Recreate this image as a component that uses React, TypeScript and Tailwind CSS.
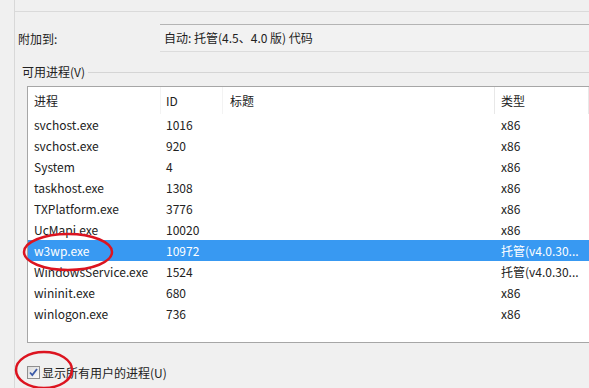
import React from "react";

const rows: { name: string; id: string; type: string; sel?: boolean }[] = [
  { name: "svchost.exe", id: "1016", type: "x86" },
  { name: "svchost.exe", id: "920", type: "x86" },
  { name: "System", id: "4", type: "x86" },
  { name: "taskhost.exe", id: "1308", type: "x86" },
  { name: "TXPlatform.exe", id: "3776", type: "x86" },
  { name: "UcMapi.exe", id: "10020", type: "x86" },
  { name: "w3wp.exe", id: "10972", type: "托管(v4.0.30...", sel: true },
  { name: "WindowsService.exe", id: "1524", type: "托管(v4.0.30..." },
  { name: "wininit.exe", id: "680", type: "x86" },
  { name: "winlogon.exe", id: "736", type: "x86" },
];

const font = {
  fontFamily: '"Noto Sans CJK SC", "Noto Sans", sans-serif',
};

export default function App() {
  return (
    <div
      className="relative w-[589px] h-[388px] overflow-hidden bg-[#f0f0f0] text-[12px] text-[#222222]"
      style={font}
    >
      <div className="ml-[14px] h-full border-l border-[#d8d8d8] flex flex-col">
        <div className="h-[12px] border-b border-[#dadada] shrink-0" />
        <div className="mt-[14px] flex items-center shrink-0">
          <div className="w-[145px] pl-[3px] leading-none">附加到:</div>
          <div className="flex-1 h-[28px] border-t border-b border-[#b4b4b4] border-b-[#dcdcdc] bg-[#f2f2f2] flex items-center pl-[4px] -mt-[2px]">
            自动: 托管(4.5、4.0 版) 代码
          </div>
        </div>
        <div className="mt-[12px] flex items-center h-[16px] shrink-0">
          <div className="pl-[7px] pr-[3px] leading-none">可用进程(V)</div>
          <div className="flex-1 border-t border-[#d5d5d5]" />
        </div>
        <div className="ml-[12px] mt-[6px] h-[257px] border border-[#a6a6a6] border-r-0 bg-white flex flex-col shrink-0">
          <div className="h-[27px] flex items-center shrink-0">
            <div className="w-[132px] pl-[6px]">进程</div>
            <div className="w-[62px] pl-[5px] border-l border-[#f3f3f3] h-full flex items-center">ID</div>
            <div className="w-[272px] pl-[7px] border-l border-[#f3f3f3] h-full flex items-center">标题</div>
            <div className="w-[94px] pl-[6px] border-l border-[#e8e8e8] h-full flex items-center">类型</div>
            <div className="flex-1 border-l border-[#e8e8e8] h-full" />
          </div>
          {rows.map((r, i) => (
            <div
              key={i}
              className={
                "h-[21px] flex items-center shrink-0 " +
                (r.sel ? "bg-[#3899f2] text-white" : "")
              }
            >
              <div className="w-[132px] pl-[6px] whitespace-nowrap">{r.name}</div>
              <div className="w-[62px] pl-[6px]">{r.id}</div>
              <div className="w-[272px]" />
              <div className="w-[94px] pl-[7px] whitespace-nowrap">{r.type}</div>
            </div>
          ))}
        </div>
        <div className="ml-[12px] mt-[23px] flex items-center gap-[2px] shrink-0">
          <div className="w-[13px] h-[13px] border border-[#8f8f8f] bg-gradient-to-br from-[#dcdcdc] to-[#fbfbfb] flex items-center justify-center">
            <svg width="11" height="11" viewBox="0 0 11 11">
              <path
                d="M2 5.5 L4.3 8 L9 2"
                fill="none"
                stroke="#3b5aa8"
                strokeWidth="1.8"
              />
            </svg>
          </div>
          <div className="leading-none">显示所有用户的进程(U)</div>
        </div>
      </div>
      <svg
        className="absolute left-0 top-0 pointer-events-none"
        width="589"
        height="388"
      >
        <ellipse
          cx="68"
          cy="252"
          rx="44"
          ry="18"
          fill="none"
          stroke="#dc1420"
          strokeWidth="2.5"
        />
        <ellipse
          cx="44"
          cy="370"
          rx="28"
          ry="18"
          fill="none"
          stroke="#dc1420"
          strokeWidth="2.5"
        />
      </svg>
    </div>
  );
}
